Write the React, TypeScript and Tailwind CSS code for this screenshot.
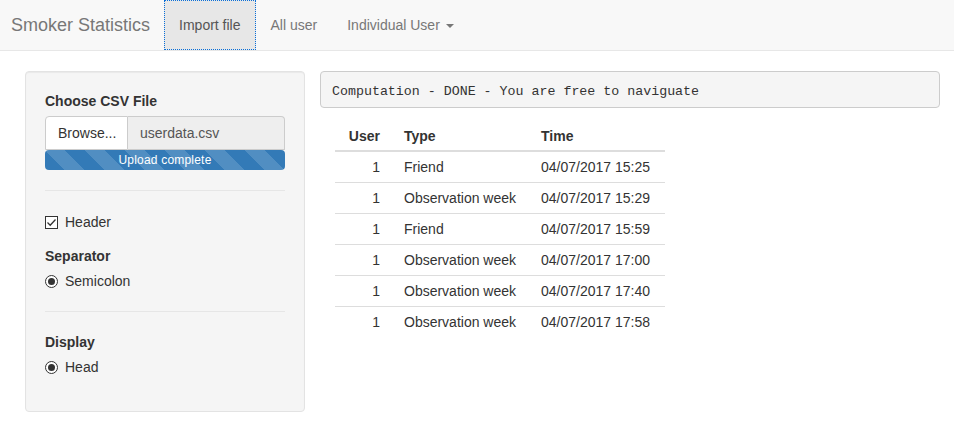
import React from "react";

const rows = [
  ["1", "Friend", "04/07/2017 15:25"],
  ["1", "Observation week", "04/07/2017 15:29"],
  ["1", "Friend", "04/07/2017 15:59"],
  ["1", "Observation week", "04/07/2017 17:00"],
  ["1", "Observation week", "04/07/2017 17:40"],
  ["1", "Observation week", "04/07/2017 17:58"],
];

function Radio() {
  return (
    <span className="mt-[1px] flex h-[13px] w-[13px] items-center justify-center rounded-full border border-[#333] bg-white">
      <span className="h-[7px] w-[7px] rounded-full bg-[#333]" />
    </span>
  );
}

export default function App() {
  return (
    <div className="min-h-[422px] bg-white text-[14px] leading-5 text-[#333] [font-family:'Liberation_Sans',Arial,sans-serif]">
      {/* navbar */}
      <div className="flex h-[51px] border-b border-[#e7e7e7] bg-[#f8f8f8]">
        <div className="pl-[11px] pr-[15px] pt-[15px] text-[18px] leading-5 text-[#777]">Smoker Statistics</div>
        <div className="-ml-[1px] flex">
          <div className="h-[50px] bg-[#e7e7e7] px-[15px] pt-[15px] text-[#555] outline-1 outline-dotted outline-[#0a6fd8] -outline-offset-1">
            Import file
          </div>
          <div className="px-[15px] pt-[15px] text-[#777]">All user</div>
          <div className="flex items-start px-[15px] pt-[15px] text-[#777]">
            Individual User
            <span className="ml-[6px] mt-[9px] h-0 w-0 border-x-[4px] border-t-[4px] border-x-transparent border-t-[#777]" />
          </div>
        </div>
      </div>

      <div className="mt-5 flex pl-[25px] pr-[14px]">
        {/* sidebar */}
        <div className="w-[280px] shrink-0 rounded border border-[#e3e3e3] bg-[#f5f5f5] p-[19px] shadow-[inset_0_1px_1px_rgba(0,0,0,0.05)]">
          <div className="font-bold">Choose CSV File</div>
          <div className="mt-[5px] flex h-[34px]">
            <div className="flex w-[83px] items-center rounded-tl border border-[#ccc] bg-white px-3">Browse...</div>
            <div className="flex flex-1 items-center rounded-tr border border-l-0 border-[#ccc] bg-[#eee] px-3 text-[#555]">userdata.csv</div>
          </div>
          <div className="flex h-5 items-center justify-center rounded bg-[#337ab7] bg-[linear-gradient(45deg,rgba(255,255,255,.15)_25%,transparent_25%,transparent_50%,rgba(255,255,255,.15)_50%,rgba(255,255,255,.15)_75%,transparent_75%,transparent)] bg-[length:40px_40px] text-[12px] tracking-[0.2px] text-white">
            Upload complete
          </div>
          <div className="mb-[21px] mt-5 border-t border-[#e6e6e6]" />
          <div className="flex items-center gap-[7px]">
            <span className="flex h-[13px] w-[13px] items-center justify-center border border-[#333] bg-white">
              <svg width="11" height="11" viewBox="0 0 11 11">
                <path d="M1.5 5.5 L4.2 8.2 L9.5 2.5" fill="none" stroke="#333" strokeWidth="1.3" />
              </svg>
            </span>
            <span>Header</span>
          </div>
          <div className="mt-[14px] font-bold">Separator</div>
          <div className="mt-[5px] flex items-center gap-[7px]">
            <Radio />
            <span>Semicolon</span>
          </div>
          <div className="my-5 border-t border-[#e6e6e6]" />
          <div className="mt-5 font-bold">Display</div>
          <div className="mt-[5px] flex items-center gap-[7px]">
            <Radio />
            <span>Head</span>
          </div>
          <div className="h-[15px]" />
        </div>

        {/* main */}
        <div className="ml-[15px] flex-1">
          <div className="h-[37px] rounded border border-[#ccc] bg-[#f5f5f5] px-[11px] pt-[11px] text-[13.3px] leading-[17px] text-[#333] [font-family:'Liberation_Mono','Courier_New',monospace]">
            Computation - DONE - You are free to naviguate
          </div>
          <table className="ml-[15px] mt-[13px] border-collapse">
            <thead>
              <tr>
                <th className="w-[57px] border-b-2 border-[#ddd] px-3 pb-[4px] pt-[5px] text-right font-bold">User</th>
                <th className="w-[137px] border-b-2 border-[#ddd] px-3 pb-[4px] pt-[5px] text-left font-bold">Type</th>
                <th className="w-[136px] border-b-2 border-[#ddd] px-3 pb-[4px] pt-[5px] text-left font-bold">Time</th>
              </tr>
            </thead>
            <tbody>
              {rows.map((r, i) => (
                <tr key={i}>
                  <td className={`px-3 py-[5px] text-right ${i > 0 ? "border-t border-[#ddd]" : ""}`}>{r[0]}</td>
                  <td className={`px-3 py-[5px] ${i > 0 ? "border-t border-[#ddd]" : ""}`}>{r[1]}</td>
                  <td className={`px-3 py-[5px] ${i > 0 ? "border-t border-[#ddd]" : ""}`}>{r[2]}</td>
                </tr>
              ))}
            </tbody>
          </table>
        </div>
      </div>
    </div>
  );
}
